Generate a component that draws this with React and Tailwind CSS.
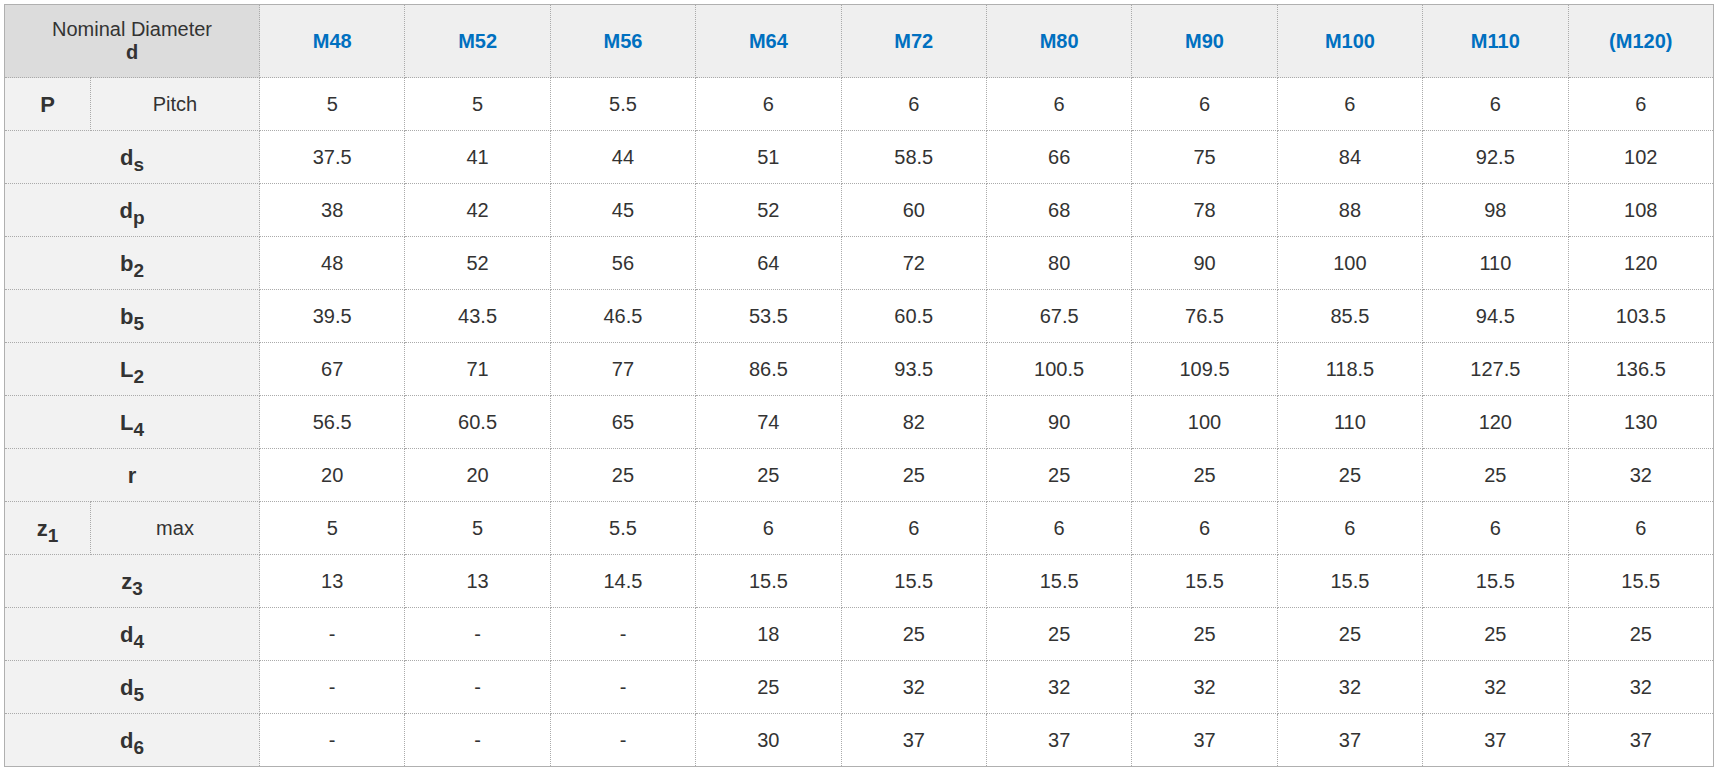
import React from "react";

const sizes = ["M48", "M52", "M56", "M64", "M72", "M80", "M90", "M100", "M110", "(M120)"];

const rows = [
  { sym: "P", sub: "", note: "Pitch", values: ["5", "5", "5.5", "6", "6", "6", "6", "6", "6", "6"] },
  { sym: "d", sub: "s", values: ["37.5", "41", "44", "51", "58.5", "66", "75", "84", "92.5", "102"] },
  { sym: "d", sub: "p", values: ["38", "42", "45", "52", "60", "68", "78", "88", "98", "108"] },
  { sym: "b", sub: "2", values: ["48", "52", "56", "64", "72", "80", "90", "100", "110", "120"] },
  { sym: "b", sub: "5", values: ["39.5", "43.5", "46.5", "53.5", "60.5", "67.5", "76.5", "85.5", "94.5", "103.5"] },
  { sym: "L", sub: "2", values: ["67", "71", "77", "86.5", "93.5", "100.5", "109.5", "118.5", "127.5", "136.5"] },
  { sym: "L", sub: "4", values: ["56.5", "60.5", "65", "74", "82", "90", "100", "110", "120", "130"] },
  { sym: "r", sub: "", values: ["20", "20", "25", "25", "25", "25", "25", "25", "25", "32"] },
  { sym: "z", sub: "1", note: "max", values: ["5", "5", "5.5", "6", "6", "6", "6", "6", "6", "6"] },
  { sym: "z", sub: "3", values: ["13", "13", "14.5", "15.5", "15.5", "15.5", "15.5", "15.5", "15.5", "15.5"] },
  { sym: "d", sub: "4", values: ["-", "-", "-", "18", "25", "25", "25", "25", "25", "25"] },
  { sym: "d", sub: "5", values: ["-", "-", "-", "25", "32", "32", "32", "32", "32", "32"] },
  { sym: "d", sub: "6", values: ["-", "-", "-", "30", "37", "37", "37", "37", "37", "37"] },
];

const cell = "border border-dotted border-[#aaaaaa] text-center align-middle";

function Symbol({ sym, sub }) {
  return (
    <span className="font-bold text-[22px]">
      {sym}
      {sub && <sub className="text-[19px] bottom-[-6px]">{sub}</sub>}
    </span>
  );
}

export default function App() {
  return (
    <div className="p-1 bg-white" style={{ fontFamily: '"Liberation Sans", Arial, sans-serif' }}>
      <table className="w-full table-fixed border-collapse border border-solid border-[#b0b0b0] text-[20px] text-[#333333]">
        <colgroup>
          <col className="w-[86px]" />
          <col className="w-[169px]" />
          {sizes.map((s) => (
            <col key={s} />
          ))}
        </colgroup>
        <thead>
          <tr className="h-[73px]">
            <th colSpan={2} className={`${cell} bg-[#dcdcdc] font-normal leading-[23px]`}>
              <div>Nominal Diameter</div>
              <div className="font-bold text-[20px]">d</div>
            </th>
            {sizes.map((s) => (
              <th key={s} className={`${cell} bg-[#efefef] font-bold text-[#0070c0]`}>
                {s}
              </th>
            ))}
          </tr>
        </thead>
        <tbody>
          {rows.map((r, i) => (
            <tr key={i} className="h-[53px]">
              {r.note ? (
                <>
                  <td className={`${cell} bg-[#f2f2f2]`}>
                    <Symbol sym={r.sym} sub={r.sub} />
                  </td>
                  <td className={`${cell} bg-[#f2f2f2]`}>{r.note}</td>
                </>
              ) : (
                <td colSpan={2} className={`${cell} bg-[#f2f2f2]`}>
                  <Symbol sym={r.sym} sub={r.sub} />
                </td>
              )}
              {r.values.map((v, j) => (
                <td key={j} className={`${cell} bg-white`}>
                  {v}
                </td>
              ))}
            </tr>
          ))}
        </tbody>
      </table>
    </div>
  );
}
